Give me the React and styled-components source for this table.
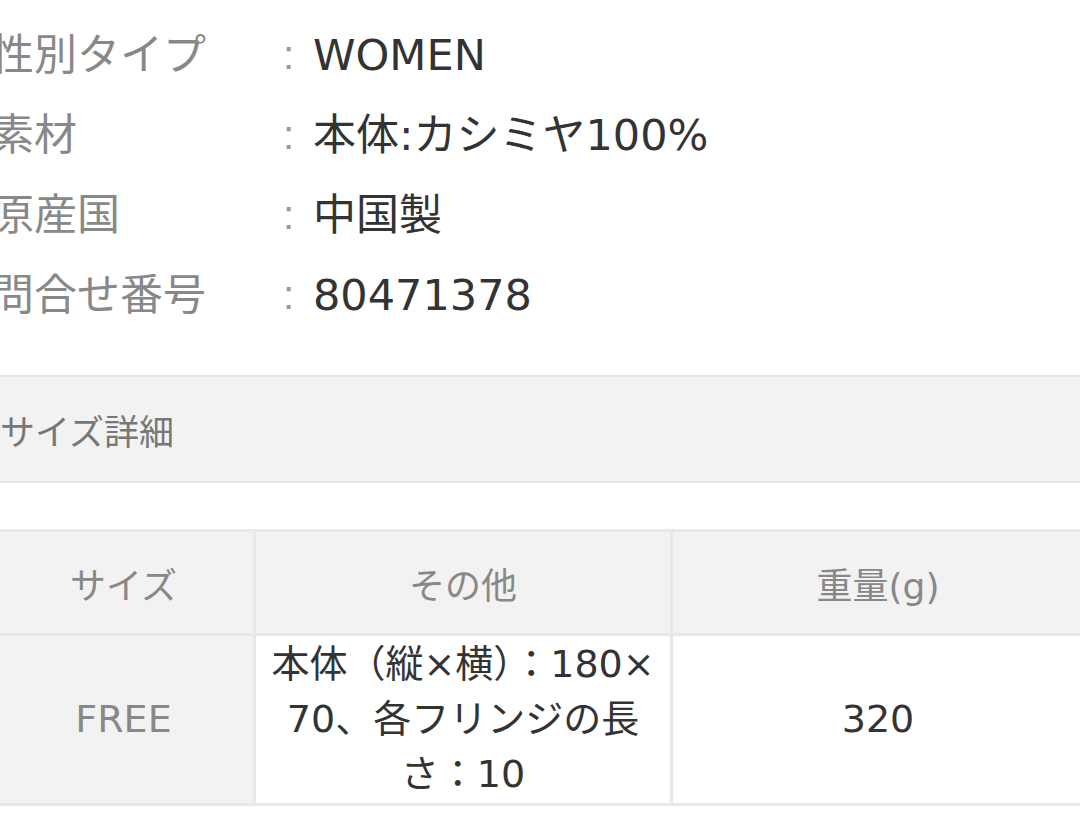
import React from "react";
import styled, { createGlobalStyle } from "styled-components";

const GlobalStyle = createGlobalStyle`
  html, body {
    margin: 0;
    padding: 0;
    background: #fff;
    overflow: hidden;
  }
  body {
    font-family: "DejaVu Sans", "Noto Sans CJK JP", sans-serif;
  }
`;

const Page = styled.div`
  width: 1095px;
  margin-left: -9px;
`;

const SpecList = styled.dl`
  margin: 0;
  padding-top: 15px;
`;

const SpecRow = styled.div`
  display: grid;
  grid-template-columns: 276px 43px 1fr;
  align-items: center;
  height: 80px;
  font-size: 43px;
  line-height: 80px;
`;

const SpecLabel = styled.dt`
  color: #888;
  white-space: nowrap;
`;

const Colon = styled.span`
  color: #999;
  font-family: "Liberation Sans", sans-serif;
  font-size: 40px;
  text-align: center;
`;

const SpecValue = styled.dd`
  margin: 0 0 0 3px;
  color: #333;
  white-space: nowrap;
`;

const SectionBar = styled.div`
  margin-top: 40px;
  height: 104px;
  display: flex;
  align-items: center;
  padding-left: 9px;
  background: #f2f2f2;
  border-top: 2px solid #e6e6e6;
  border-bottom: 2px solid #e6e6e6;
  color: #777;
  font-size: 35px;
`;

const SizeTable = styled.table`
  margin-top: 46px;
  width: 100%;
  border-collapse: collapse;
  table-layout: fixed;
`;

const HeadCell = styled.th`
  height: 101px;
  padding: 0;
  background: #f2f2f2;
  border: 3px solid #e8e8e8;
  color: #888;
  font-size: 36px;
  font-weight: normal;
  text-align: center;
`;

const Cell = styled.td`
  padding: 0;
  height: 167px;
  background: ${p => (p.$shaded ? "#f2f2f2" : "#fff")};
  border: 3px solid #e8e8e8;
  color: ${p => (p.$muted ? "#888" : "#333")};
  font-size: ${p => p.$size || 38}px;
  line-height: 55px;
  text-align: center;
  vertical-align: middle;
`;

const Line = styled.span`
  display: block;
  white-space: nowrap;
`;

const specs = [
  ["性別タイプ", "WOMEN"],
  ["素材", "本体:カシミヤ100%"],
  ["原産国", "中国製"],
  ["問合せ番号", "80471378"],
];

const otherLines = ["本体（縦×横）：180×", "70、各フリンジの長", "さ：10"];

const App = () => {
  return (
    <Page>
      <GlobalStyle />
      <SpecList>
        {specs.map(([label, value]) => (
          <SpecRow key={label}>
            <SpecLabel>{label}</SpecLabel>
            <Colon>:</Colon>
            <SpecValue>{value}</SpecValue>
          </SpecRow>
        ))}
      </SpecList>

      <SectionBar>サイズ詳細</SectionBar>

      <SizeTable>
        <colgroup>
          <col style={{ width: "262px" }} />
          <col style={{ width: "417px" }} />
          <col />
        </colgroup>
        <thead>
          <tr>
            <HeadCell>サイズ</HeadCell>
            <HeadCell>その他</HeadCell>
            <HeadCell>重量(g)</HeadCell>
          </tr>
        </thead>
        <tbody>
          <tr>
            <Cell $shaded $muted>FREE</Cell>
            <Cell>
              {otherLines.map(line => (
                <Line key={line}>{line}</Line>
              ))}
            </Cell>
            <Cell>320</Cell>
          </tr>
        </tbody>
      </SizeTable>
    </Page>
  );
};

export default App;
